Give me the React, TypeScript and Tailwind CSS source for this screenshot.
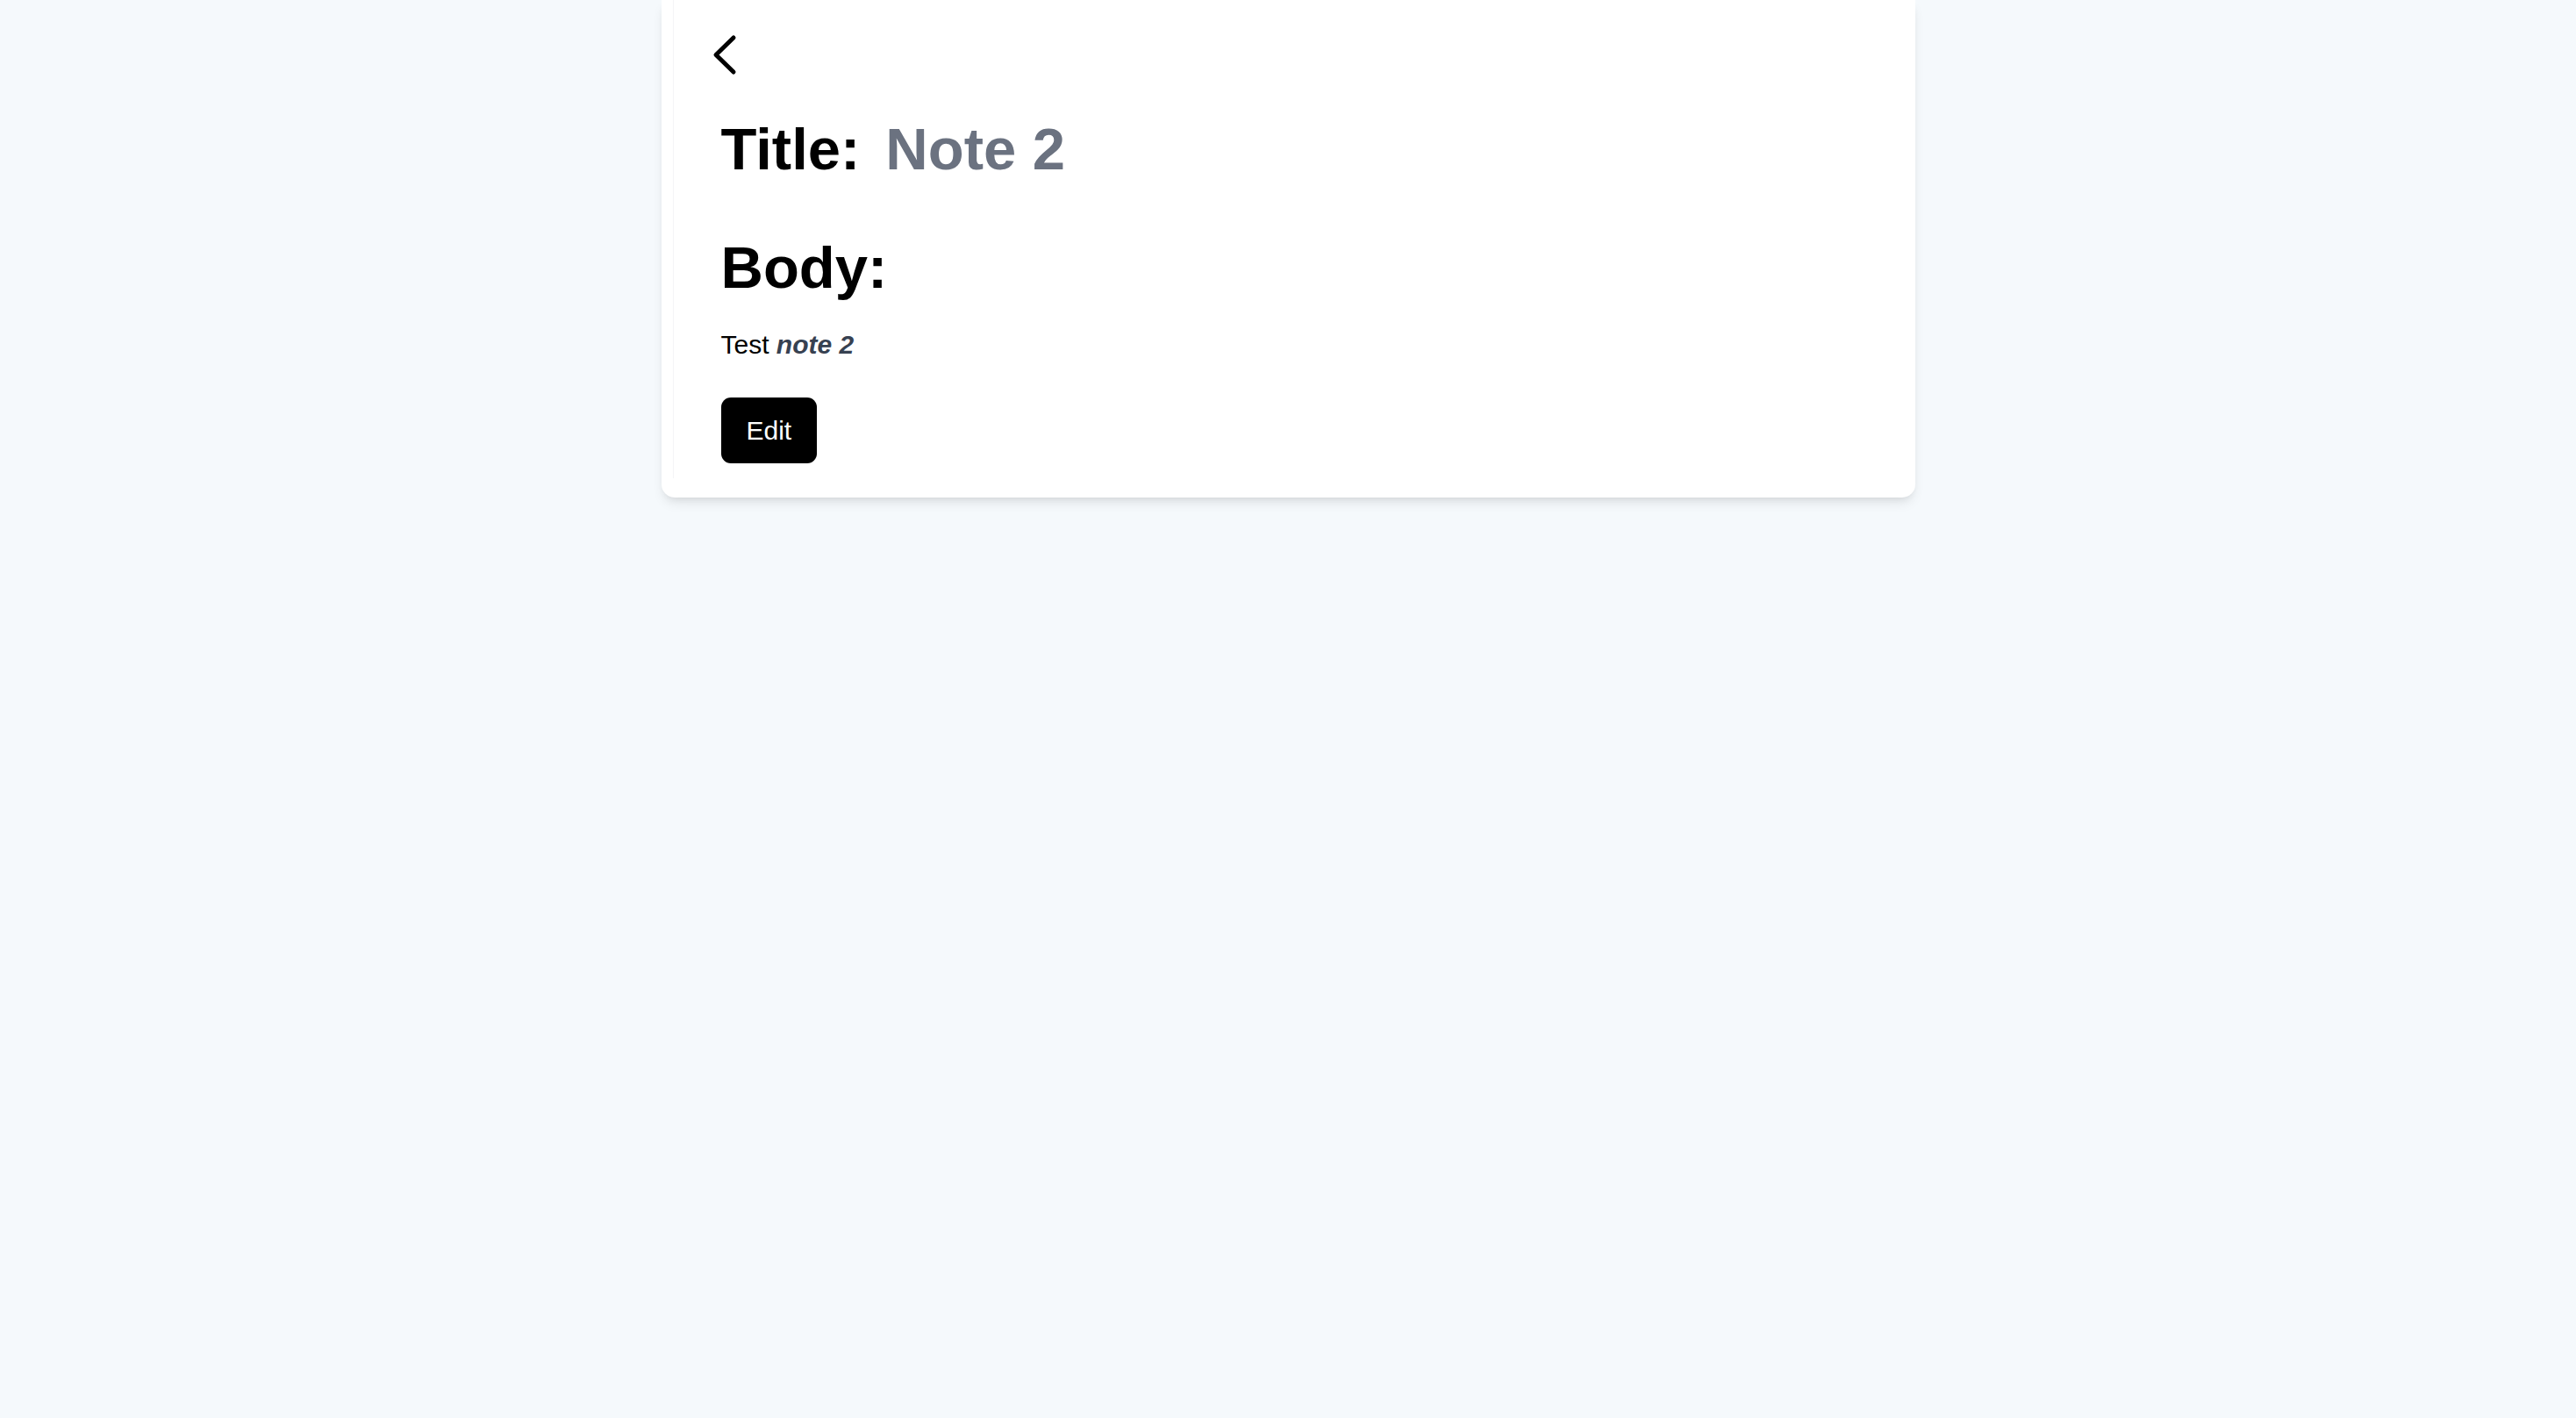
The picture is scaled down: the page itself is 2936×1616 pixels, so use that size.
export default function App() {
  return (
    <div className="min-h-screen bg-[#f5f9fc] font-['Liberation_Sans',Arial,sans-serif]">
      <div className="mx-auto w-[1429px] rounded-b-[15px] bg-white pb-[22px] pl-[13px] shadow-[0_8px_14px_-3px_rgba(0,0,0,0.1),0_4px_8px_-4px_rgba(0,0,0,0.08)]">
        <div className="border-l border-[#f4f5f7] pt-[37px] pb-[17px] pl-[54px]">
          <button className="-ml-[16px] block">
            <svg width="36" height="52" viewBox="0 0 36 52" fill="none">
              <polyline
                points="30,6 10,25.5 30,45"
                stroke="#000"
                strokeWidth="5"
                strokeLinecap="round"
                strokeLinejoin="round"
              />
            </svg>
          </button>

          <h1 className="mt-[43px] flex text-[67px] font-bold leading-[75px] text-black">
            <span>Title:</span>
            <span className="ml-[29px] text-[#6b7280]">Note 2</span>
          </h1>

          <h2 className="mt-[60px] text-[67px] font-bold leading-[75px] text-black">Body:</h2>

          <p className="mt-[28px] text-[30px] leading-[45px] text-black">
            Test <em className="font-bold text-[#374151]">note 2</em>
          </p>

          <button className="mt-[38px] rounded-[11px] bg-black px-[29px] py-[15px] text-[30px] leading-[45px] text-white">
            Edit
          </button>
        </div>
      </div>
    </div>
  );
}
